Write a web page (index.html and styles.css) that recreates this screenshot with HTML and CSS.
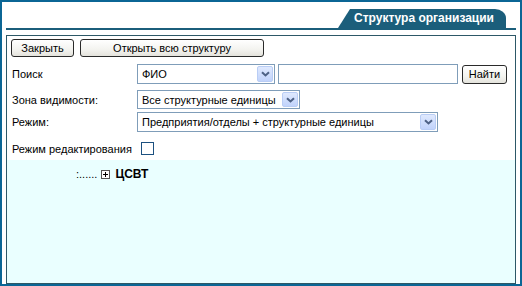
FILE: index.html
```html
<!DOCTYPE html>
<html lang="ru">
<head>
<meta charset="utf-8">
<title>Структура организации</title>
<link rel="stylesheet" href="styles.css">
</head>
<body>
<div class="frame">
  <div class="header">
    <div class="tab-row"><div class="tab">Структура организации</div></div>
    <div class="rule"></div>
  </div>
  <div class="box">
    <div class="form">
      <div class="toolbar">
        <span class="btn btn-close">Закрыть</span>
        <span class="btn btn-open">Открыть всю структуру</span>
      </div>
      <div class="row row-search">
        <span class="label">Поиск</span>
        <span class="select sel-fio"><span class="sel-text">ФИО</span><span class="arrow"><svg width="9" height="6" viewBox="0 0 9 6"><path d="M1 1.2 L4.5 4.5 L8 1.2" fill="none" stroke="#4d6185" stroke-width="2"/></svg></span></span>
        <span class="input"></span>
        <span class="btn btn-find">Найти</span>
      </div>
      <div class="row row-zone">
        <span class="label">Зона видимости:</span>
        <span class="select sel-zone"><span class="sel-text">Все структурные единицы</span><span class="arrow"><svg width="9" height="6" viewBox="0 0 9 6"><path d="M1 1.2 L4.5 4.5 L8 1.2" fill="none" stroke="#4d6185" stroke-width="2"/></svg></span></span>
      </div>
      <div class="row row-mode">
        <span class="label">Режим:</span>
        <span class="select sel-mode"><span class="sel-text">Предприятия/отделы + структурные единицы</span><span class="arrow"><svg width="9" height="6" viewBox="0 0 9 6"><path d="M1 1.2 L4.5 4.5 L8 1.2" fill="none" stroke="#4d6185" stroke-width="2"/></svg></span></span>
      </div>
      <div class="row row-edit">
        <span class="label-edit">Режим редактирования</span>
        <span class="checkbox"></span>
      </div>
    </div>
    <div class="tree">
      <div class="node">
        <span class="dots">:......</span>
        <svg class="plus" width="9" height="9" viewBox="0 0 9 9"><rect x="0.5" y="0.5" width="8" height="8" fill="#fff" stroke="#555"/><path d="M2 4.5 H7 M4.5 2 V7" stroke="#000" stroke-width="1"/></svg>
        <span class="node-name">ЦСВТ</span>
      </div>
    </div>
  </div>
</div>
</body>
</html>
```
FILE: styles.css
```css
html, body {
  margin: 0;
  padding: 0;
  background: #fff;
}
body {
  font-family: "Liberation Sans", Arial, sans-serif;
  font-size: 11px;
  color: #000;
}
.frame {
  width: 522px;
  height: 286px;
  box-sizing: border-box;
  border: 2px solid #0b6695;
  display: flex;
  flex-direction: column;
  padding: 0 4px;
}
.header {
  padding-top: 7px;
}
.tab-row {
  display: flex;
  justify-content: flex-end;
  padding-right: 10px;
}
.tab {
  width: 168px;
  height: 19px;
  box-sizing: border-box;
  background: #1b5e7b;
  color: #fff;
  font-weight: bold;
  font-size: 12px;
  line-height: 19px;
  text-align: center;
  padding-left: 4px;
  border-top-right-radius: 11px 9px;
  clip-path: polygon(12px 0, 100% 0, 100% 100%, 0 100%);
}
.rule {
  height: 2px;
  background: #1b5e7b;
}
.box {
  margin-top: 5px;
  flex: 1;
  border: 1px solid #2d5867;
  display: flex;
  flex-direction: column;
  background: #fff;
}
.form {
  padding: 3px 0 5px 4px;
  display: flex;
  flex-direction: column;
}
.toolbar {
  display: flex;
  gap: 6px;
}
.btn {
  display: inline-flex;
  align-items: center;
  justify-content: center;
  box-sizing: border-box;
  height: 18px;
  border: 1px solid #2a2a2a;
  border-radius: 3px;
  background: linear-gradient(#ffffff, #f3f3ef 60%, #e4e3dc);
  white-space: nowrap;
}
.btn-close { width: 63px; }
.btn-open { width: 184px; }
.row {
  display: flex;
  align-items: center;
}
.label {
  width: 126px;
  padding-left: 1px;
  box-sizing: border-box;
}
.row-search { margin-top: 7px; height: 20px; }
.row-zone { margin-top: 6px; height: 19px; }
.row-mode { margin-top: 3px; height: 20px; }
.row-edit { margin-top: 10px; height: 13px; }
.select {
  display: flex;
  align-items: stretch;
  box-sizing: border-box;
  height: 100%;
  border: 1px solid #7f9db9;
  background: #fff;
  padding: 1px;
}
.sel-text {
  flex: 1;
  padding-left: 3px;
  display: flex;
  align-items: center;
  white-space: nowrap;
}
.arrow {
  width: 16px;
  display: flex;
  align-items: center;
  justify-content: center;
  box-sizing: border-box;
  border: 1px solid #b9cdf5;
  border-radius: 2px;
  background: linear-gradient(#dfe9fe, #c1d3fb);
}
.sel-fio { width: 138px; }
.sel-zone { width: 163px; }
.sel-mode { width: 301px; }
.input {
  box-sizing: border-box;
  width: 180px;
  height: 100%;
  margin-left: 3px;
  border: 1px solid #7f9db9;
  background: #fff;
}
.btn-find {
  width: 45px;
  margin-left: 4px;
  height: 19px;
}
.label-edit {
  padding-left: 1px;
  white-space: nowrap;
}
.checkbox {
  width: 13px;
  height: 13px;
  box-sizing: border-box;
  border: 1px solid #1c5180;
  background: #fff;
  margin-left: 9px;
}
.tree {
  flex: 1;
  background: #eaffff;
  padding: 7px 0 0 69px;
}
.node {
  display: flex;
  align-items: center;
  height: 14px;
}
.plus {
  margin-left: 4px;
}
.node-name {
  margin-left: 5px;
  font-weight: bold;
  font-size: 12px;
}
```
